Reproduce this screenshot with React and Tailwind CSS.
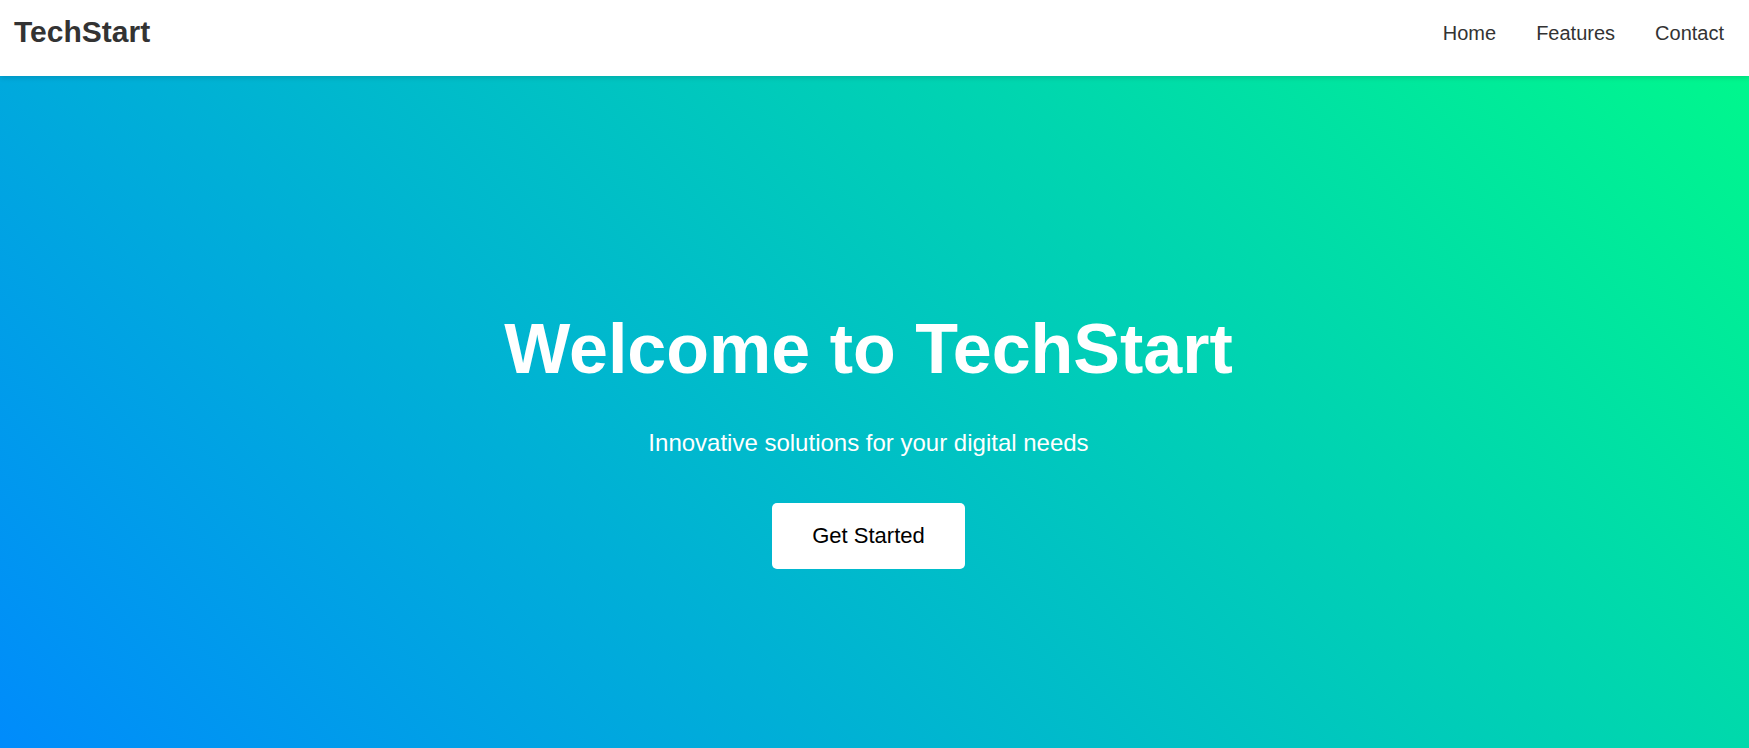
export default function App() {
  return (
    <div className="min-h-screen font-['Liberation_Sans',Arial,sans-serif]">
      <header className="relative z-10 flex h-[76px] items-start justify-between bg-white pl-[14px] pr-[25px] pt-[15px] shadow-[0_2px_5px_rgba(0,0,0,0.12)]">
        <div className="text-[30px] font-bold leading-[1.15] text-[#333333]">TechStart</div>
        <nav className="mt-[7px] flex gap-10 text-[20px] leading-[1.15] text-[#333333]">
          <a href="#">Home</a>
          <a href="#">Features</a>
          <a href="#">Contact</a>
        </nav>
      </header>
      <section className="flex h-[748px] flex-col items-center justify-center bg-[linear-gradient(45deg,#0088ff,#00f78d)] pb-[22px] pr-3 text-center text-white">
        <h1 className="text-[70px] font-bold leading-[1.15]">Welcome to TechStart</h1>
        <p className="mt-[39px] text-[24px] leading-[1.15]">Innovative solutions for your digital needs</p>
        <button className="mt-[46px] flex h-[66px] w-[193px] items-center justify-center rounded-[5px] bg-white text-[22px] leading-[1.15] text-black">
          Get Started
        </button>
      </section>
    </div>
  );
}
